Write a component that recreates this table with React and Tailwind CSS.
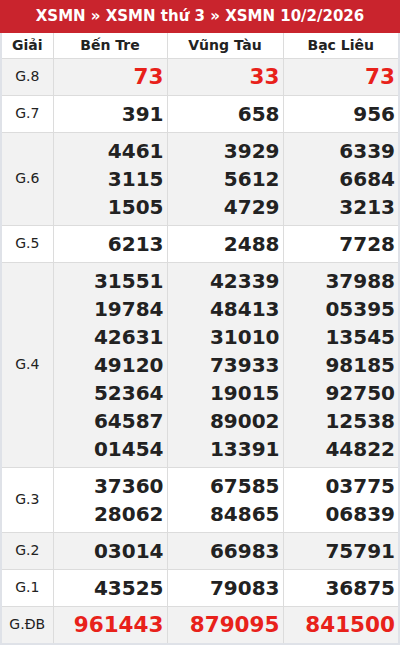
import React from 'react';

const provinces = ['Bến Tre', 'Vũng Tàu', 'Bạc Liêu'];

// kết quả theo giải, mỗi cột một tỉnh
const rows = [
  { name: 'G.8', red: true, data: [['73'], ['33'], ['73']] },
  { name: 'G.7', data: [['391'], ['658'], ['956']] },
  { name: 'G.6', data: [['4461', '3115', '1505'], ['3929', '5612', '4729'], ['6339', '6684', '3213']] },
  { name: 'G.5', data: [['6213'], ['2488'], ['7728']] },
  {
    name: 'G.4',
    data: [
      ['31551', '19784', '42631', '49120', '52364', '64587', '01454'],
      ['42339', '48413', '31010', '73933', '19015', '89002', '13391'],
      ['37988', '05395', '13545', '98185', '92750', '12538', '44822'],
    ],
  },
  { name: 'G.3', data: [['37360', '28062'], ['67585', '84865'], ['03775', '06839']] },
  { name: 'G.2', data: [['03014'], ['66983'], ['75791']] },
  { name: 'G.1', data: [['43525'], ['79083'], ['36875']] },
  { name: 'G.ĐB', red: true, data: [['961443'], ['879095'], ['841500']] },
];

export default function App() {
  return (
    <div className="w-[400px] bg-white" style={{ fontFamily: '"DejaVu Sans", sans-serif' }}>
      <div className="h-[33px] bg-[#c9242d] flex items-center justify-center text-white font-bold text-[15px]">
        XSMN » XSMN thứ 3 » XSMN 10/2/2026
      </div>
      <table className="w-full border-collapse border-2 border-t-0 border-[#dfe2e8] table-fixed">
        <colgroup>
          <col className="w-[52px]" />
          <col className="w-[114px]" />
          <col className="w-[116px]" />
          <col />
        </colgroup>
        <thead>
          <tr className="h-[25px]">
            <th className="border border-[#dcdcdc] border-t-0 text-[14px] font-bold text-[#222] p-0">Giải</th>
            {provinces.map((p) => (
              <th key={p} className="border border-[#dcdcdc] border-t-0 text-[14px] font-bold text-[#222] p-0">{p}</th>
            ))}
          </tr>
        </thead>
        <tbody>
          {rows.map((r, i) => (
            <tr key={r.name} className={i % 2 === 0 ? 'bg-[#f2f2f2]' : 'bg-white'}>
              <td className="border border-[#dcdcdc] text-center text-[14px] text-[#222] p-0">{r.name}</td>
              {r.data.map((nums, j) => (
                <td key={j} className="border border-[#dcdcdc] text-right pr-[3px] py-[4px]">
                  {nums.map((n, k) => (
                    <div
                      key={k}
                      className={`leading-[28px] font-bold ${r.red ? 'text-[#e8211a] text-[21.5px]' : 'text-[#222] text-[20px]'}`}
                    >
                      {n}
                    </div>
                  ))}
                </td>
              ))}
            </tr>
          ))}
        </tbody>
      </table>
    </div>
  );
}
